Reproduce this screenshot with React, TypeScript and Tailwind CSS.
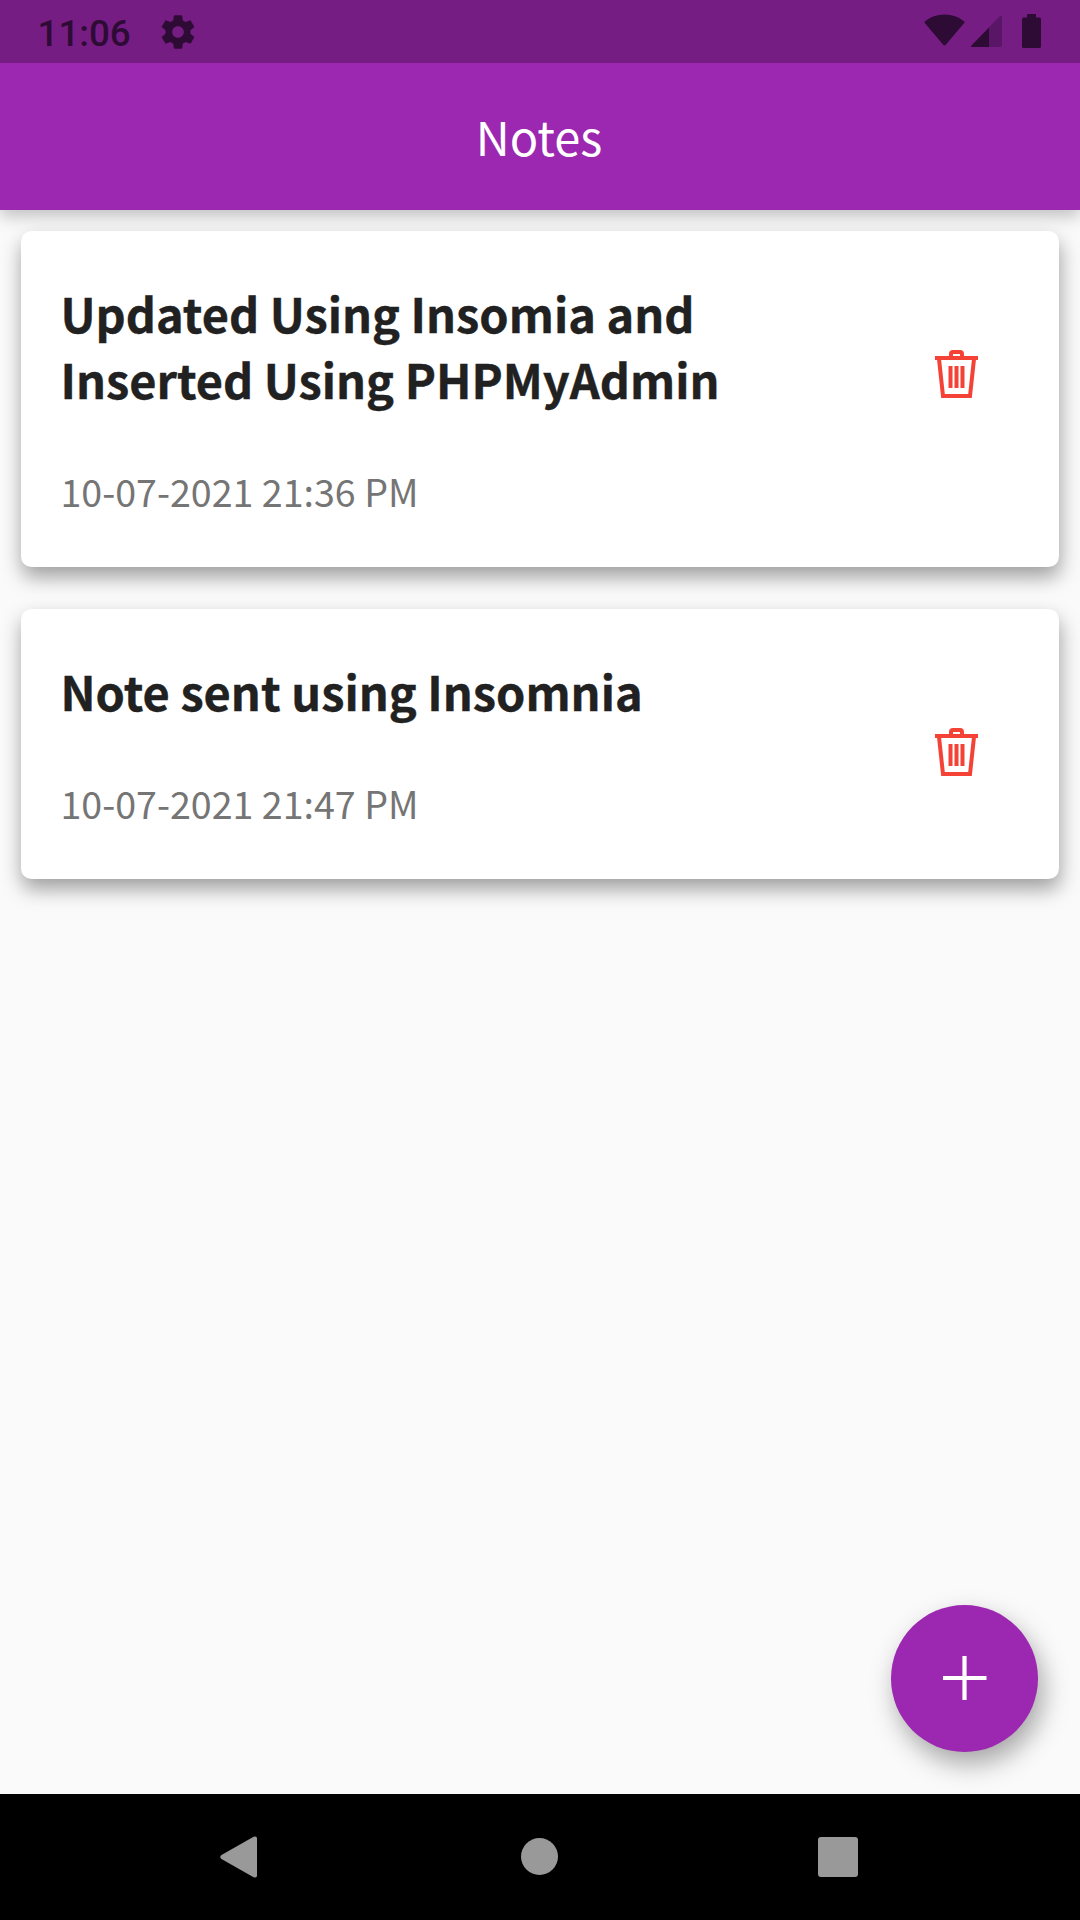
const notes = [
  { lines: ['Updated Using Insomia and', 'Inserted Using PHPMyAdmin'], date: '10-07-2021 21:36 PM' },
  { lines: ['Note sent using Insomnia'], date: '10-07-2021 21:47 PM' },
];

function TrashIcon() {
  return (
    <svg width="43" height="48" viewBox="0 0 43 48" fill="none" stroke="#f44336" strokeWidth="4">
      <path d="M0 8H43" />
      <path d="M16 7V4Q16 2 18 2H25Q27 2 27 4V7" />
      <path d="M4 9L8 46H35L39 9" />
      <path d="M15.5 16V38M21.5 16V38M27.5 16V38" />
    </svg>
  );
}

function GearIcon() {
  return (
    <svg className="mt-[12px]" width="40" height="40" viewBox="0 0 24 24" fill="currentColor">
      <path d="M19.43 12.98c.04-.32.07-.64.07-.98s-.03-.66-.07-.98l2.11-1.65c.19-.15.24-.42.12-.64l-2-3.46c-.12-.22-.39-.3-.61-.22l-2.49 1c-.52-.4-1.08-.73-1.69-.98l-.38-2.65C14.46 2.18 14.25 2 14 2h-4c-.25 0-.46.18-.49.42l-.38 2.65c-.61.25-1.17.59-1.69.98l-2.49-1c-.23-.09-.49 0-.61.22l-2 3.46c-.13.22-.07.49.12.64l2.11 1.65c-.04.32-.07.65-.07.98s.03.66.07.98l-2.11 1.65c-.19.15-.24.42-.12.64l2 3.46c.12.22.39.3.61.22l2.49-1c.52.4 1.08.73 1.69.98l.38 2.65c.03.24.24.42.49.42h4c.25 0 .46-.18.49-.42l.38-2.65c.61-.25 1.17-.59 1.69-.98l2.49 1c.23.09.49 0 .61-.22l2-3.46c.12-.22.07-.49-.12-.64l-2.11-1.65zM12 15.5c-1.93 0-3.5-1.57-3.5-3.5s1.57-3.5 3.5-3.5 3.5 1.57 3.5 3.5-1.57 3.5-3.5 3.5z" />
    </svg>
  );
}

function StatusBar() {
  return (
    <header className="flex h-[63px] items-start justify-between bg-[#751d83] pl-[37.5px] pr-[39px] text-[#2e0b34]">
      <div className="flex items-start">
        <span className="w-[120.5px] pt-[12px] font-['Roboto'] text-[36.75px] font-medium leading-[43px]">11:06</span>
        <GearIcon />
      </div>
      <div className="flex items-start pt-[14px]">
        <svg width="41" height="33" viewBox="0 0 41 33" fill="currentColor">
          <path d="M1 7.2Q9 .5 20.5 .5T40 7.2Q41 8 40.2 9L21.6 31Q20.5 32 19.4 31L.8 9Q0 8 1 7.2Z" />
        </svg>
        <svg className="ml-[6px] mt-[1px]" width="31" height="32" viewBox="0 0 31 32" fill="currentColor">
          <path d="M1 30L28.5 1.5Q31 0 31 2V30Q31 32 29 32H1Q-1 32 1 30Z" fill="#5a1666" />
          <path d="M1 30L18 12.7V32H1Q-1 32 1 30Z" />
        </svg>
        <svg className="ml-[20px]" width="19" height="34" viewBox="0 0 19 34" fill="currentColor">
          <path d="M5 0H14V3.5H17.5Q19 3.5 19 5V32.5Q19 34 17.5 34H1.5Q0 34 0 32.5V5Q0 3.5 1.5 3.5H5Z" />
        </svg>
      </div>
    </header>
  );
}

export default function App() {
  return (
    <div className="relative flex h-[1920px] w-[1080px] flex-col overflow-hidden bg-[#fafafa] font-['Noto_Sans_CJK_SC',sans-serif]">
      <div className="relative z-10 shadow-[0_6px_16px_rgba(0,0,0,0.24)]">
        <StatusBar />
        <div className="flex h-[147px] justify-center bg-[#9c27b0] pr-[2px] pt-[40px]">
          <h1 className="text-[47px] font-normal leading-[66px] text-white">Notes</h1>
        </div>
      </div>
      <main className="flex flex-1 flex-col gap-[42px] px-[21px] pt-[21px]">
        {notes.map((note) => (
          <article
            key={note.date}
            className="flex items-start justify-between rounded-[10.5px] bg-white pb-[50px] pl-[39.5px] pr-[81px] pt-[49px] shadow-[1px_10px_20px_rgba(0,0,0,0.37)]"
          >
            <div>
              <h2 className="text-[46.9px] font-bold leading-[66px] text-[#212121] [-webkit-text-stroke:0.4px_#212121]">
                {note.lines.map((line) => (
                  <span key={line} className="block whitespace-nowrap">{line}</span>
                ))}
              </h2>
              <p className="mt-[52px] text-[37.6px] font-normal leading-[53px] text-[#757575]">{note.date}</p>
            </div>
            <button className="mt-[70px]" aria-label="Delete note"><TrashIcon /></button>
          </article>
        ))}
      </main>
      <button
        aria-label="Add note"
        className="absolute bottom-[168px] right-[42px] flex size-[147px] items-center justify-center rounded-full bg-[#9c27b0] pb-[1px] shadow-[5px_12px_26px_rgba(0,0,0,0.34)]"
      >
        <svg width="44" height="44" viewBox="0 0 44 44" stroke="white" strokeWidth="4.2">
          <path d="M21.5 0V44M-.5 22H43.5" />
        </svg>
      </button>
      <nav className="z-10 flex h-[126px] items-center justify-between bg-black pl-[219.5px] pr-[222px] text-[#999]">
        <svg width="38" height="44" viewBox="0 0 39 44" fill="currentColor">
          <path d="M1.5 20L34.5 1.2Q38 0 38 3V41Q38 44 34.5 42.8L1.5 24Q-1 22 1.5 20Z" />
        </svg>
        <div className="mb-[1px] ml-[3px] size-[37px] rounded-full bg-[#999]" />
        <div className="size-[40px] rounded-[3px] bg-[#999]" />
      </nav>
    </div>
  );
}
